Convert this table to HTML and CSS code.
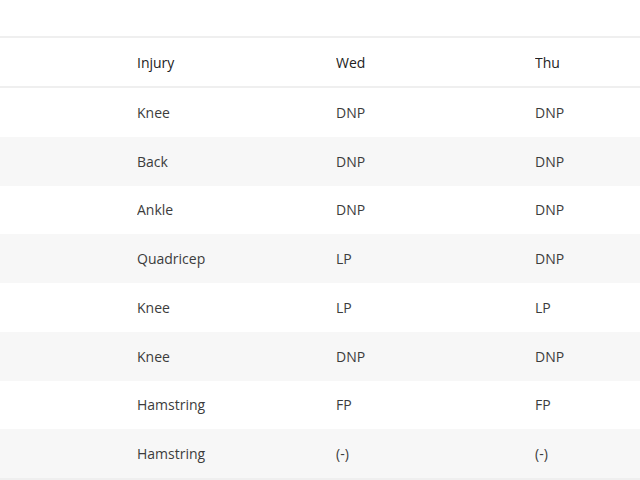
FILE: index.html
```html
<!DOCTYPE html>
<html>
<head>
<meta charset="utf-8">
<link rel="stylesheet" href="styles.css">
</head>
<body>
<div class="top"></div>
<div class="table">
  <div class="row head"><div class="c first"></div><div class="c">Injury</div><div class="c">Wed</div><div class="c">Thu</div></div>
  <div class="row"><div class="c first"></div><div class="c">Knee</div><div class="c">DNP</div><div class="c">DNP</div></div>
  <div class="row alt"><div class="c first"></div><div class="c">Back</div><div class="c">DNP</div><div class="c">DNP</div></div>
  <div class="row"><div class="c first"></div><div class="c">Ankle</div><div class="c">DNP</div><div class="c">DNP</div></div>
  <div class="row alt"><div class="c first"></div><div class="c">Quadricep</div><div class="c">LP</div><div class="c">DNP</div></div>
  <div class="row"><div class="c first"></div><div class="c">Knee</div><div class="c">LP</div><div class="c">LP</div></div>
  <div class="row alt"><div class="c first"></div><div class="c">Knee</div><div class="c">DNP</div><div class="c">DNP</div></div>
  <div class="row"><div class="c first"></div><div class="c">Hamstring</div><div class="c">FP</div><div class="c">FP</div></div>
  <div class="row alt"><div class="c first"></div><div class="c">Hamstring</div><div class="c">(-)</div><div class="c">(-)</div></div>
</div>
</body>
</html>
```
FILE: styles.css
```css
html, body {
  margin: 0;
  padding: 0;
  background: #fff;
  overflow: hidden;
}
body {
  font-family: "Open Sans", "DejaVu Sans", sans-serif;
  font-size: 14px;
  color: #3c3c3c;
}
.top {
  height: 36px;
  border-bottom: 2px solid #efefef;
}
.table {
  display: flex;
  flex-direction: column;
  border-bottom: 2px solid #efefef;
}
.row {
  display: grid;
  grid-template-columns: 137px 199px 199px 105px;
  height: 48.75px;
  align-items: center;
}
.row.head {
  height: 48px;
  border-bottom: 2px solid #efefef;
  color: #222;
}
.row.alt {
  background: #f7f7f7;
}
.c {
  white-space: nowrap;
  overflow: hidden;
}
```
